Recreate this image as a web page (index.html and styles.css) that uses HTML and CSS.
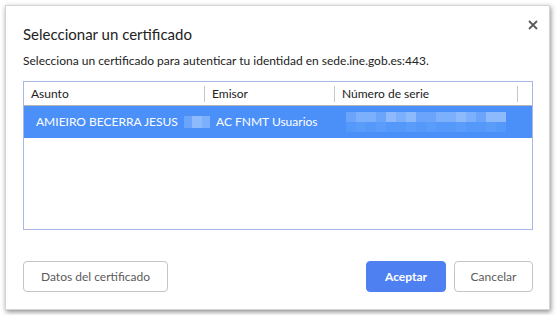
FILE: index.html
```html
<!DOCTYPE html>
<html lang="es">
<head>
    <meta charset="UTF-8">
    <title>Seleccionar un certificado</title>
    <link rel="stylesheet" href="styles.css">
</head>
<body>
    <div class="dialog">
        <div class="dialog-head">
            <h1>Seleccionar un certificado</h1>
            <button class="close" aria-label="Cerrar">
                <svg width="10" height="10" viewBox="0 0 10 10">
                    <path d="M1 1L9 9M9 1L1 9" stroke="#5a5a5a" stroke-width="1.8" fill="none"/>
                </svg>
            </button>
        </div>
        <p class="subtitle">Selecciona un certificado para autenticar tu identidad en sede.ine.gob.es:443.</p>

        <div class="cert-table">
            <div class="cert-head">
                <div class="cell">Asunto</div>
                <div class="cell sep">Emisor</div>
                <div class="cell sep">Número de serie</div>
                <div class="cell sep"></div>
            </div>
            <div class="cert-row selected">
                <div class="cell">AMIEIRO BECERRA JESUS
                    <span class="blur blur-short">
                        <i class="p1"></i><i class="p3"></i><i class="p2"></i>
                    </span>
                </div>
                <div class="cell">AC FNMT Usuarios</div>
                <div class="cell">
                    <span class="blur blur-long">
                        <i class="p1"></i><i class="p2"></i><i class="p2"></i><i class="p1"></i><i class="p3"></i><i class="p2"></i><i class="p3"></i><i class="p1"></i>
                        <i class="p1"></i><i class="p2"></i><i class="p2"></i><i class="p3"></i><i class="p2"></i><i class="p1"></i><i class="p3"></i><i class="p3"></i>
                        <i class="p4"></i><i class="p5"></i><i class="p4"></i><i class="p5"></i><i class="p4"></i><i class="p4"></i><i class="p5"></i><i class="p4"></i>
                        <i class="p5"></i><i class="p4"></i><i class="p4"></i><i class="p5"></i><i class="p4"></i><i class="p4"></i><i class="p5"></i><i class="p4"></i>
                    </span>
                </div>
            </div>
        </div>

        <div class="buttons">
            <button class="btn btn-details">Datos del certificado</button>
            <div class="spacer"></div>
            <button class="btn btn-primary">Aceptar</button>
            <button class="btn btn-cancel">Cancelar</button>
        </div>
    </div>
</body>
</html>
```

FILE: styles.css
```css
body {
    margin: 0;
    background: #ffffff;
    font-family: "Segoe UI", Lato, "Noto Sans", sans-serif;
}
.dialog {
    margin: 5px;
    width: 545px;
    height: 305px;
    box-sizing: border-box;
    padding: 18px 16px 17px 17px;
    background: white;
    border: 1px solid #d4d4d4;
    box-shadow: 1px 2px 5px rgba(0, 0, 0, 0.45);
    display: flex;
    flex-direction: column;
}
.dialog-head {
    display: flex;
    justify-content: space-between;
    align-items: flex-start;
}
h1 {
    margin: 0;
    font-size: 15px;
    font-weight: 400;
    line-height: 20px;
    color: #222;
}
.close {
    border: none;
    background: none;
    padding: 0;
    margin: -4px -5px 0 0;
    width: 10px;
    height: 10px;
    display: flex;
}
.subtitle {
    margin: 9px 0 0 0;
    font-size: 12px;
    line-height: 16px;
    color: #222;
}
.cert-table {
    margin-top: 12px;
    height: 149px;
    box-sizing: border-box;
    border: 1px solid #a9b7e8;
}
.cert-head,
.cert-row {
    display: grid;
    grid-template-columns: 180px 130px 183px 1fr;
}
.cert-head {
    padding: 4px 0 3px;
    border-bottom: 1px solid #b4b4b4;
    font-size: 12px;
    line-height: 16px;
    color: #222;
}
.cert-head .cell {
    padding-left: 7px;
}
.cert-head .sep {
    border-left: 1px solid #c8c8c8;
}
.cert-row {
    height: 32px;
    font-size: 12px;
    line-height: 32px;
}
.cert-row .cell {
    min-width: 0;
    padding-left: 12px;
    white-space: nowrap;
    display: flex;
    align-items: center;
}
.selected {
    background: #4a90f8;
    color: white;
}
.blur {
    display: inline-grid;
    grid-auto-rows: 10px;
}
.blur i {
    display: block;
}
.blur-short {
    margin-left: 6px;
    grid-template-columns: 8px 10px 8px;
    grid-template-rows: 12px;
}
.blur-long {
    grid-template-columns: repeat(16, 10px);
}
.p1 { background: #6aa5fb; }
.p2 { background: #7cb0fc; }
.p3 { background: #8dbafd; }
.p4 { background: #5499f9; }
.p5 { background: #5a9cf9; }
.buttons {
    margin-top: auto;
    display: flex;
    gap: 8px;
}
.spacer {
    flex: 1;
}
.btn {
    height: 31px;
    padding: 0;
    border: 1px solid #c4c4c4;
    border-radius: 4px;
    background: white;
    color: #5b5b5b;
    font-family: inherit;
    font-size: 12px;
}
.btn-details {
    width: 145px;
}
.btn-cancel {
    width: 79px;
}
.btn-primary {
    width: 80px;
    background: #4f80f2;
    border-color: #4f80f2;
    color: white;
    font-weight: 700;
}
```
